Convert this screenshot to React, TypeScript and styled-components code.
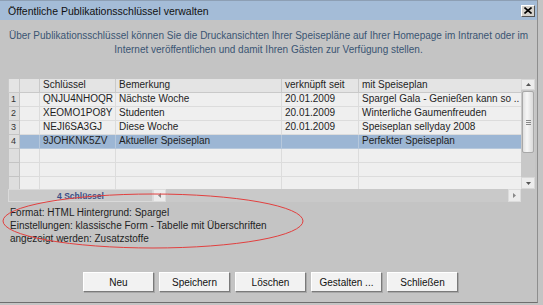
import React from 'react';
import styled, { createGlobalStyle } from 'styled-components';

const GlobalStyle = createGlobalStyle`
  html, body {
    margin: 0;
    padding: 0;
    background: #c4c4c4;
  }
  body {
    font-family: "Liberation Sans", Arial, sans-serif;
    font-size: 10px;
    color: #1e1e1e;
  }
`;

type Row = {
  key: string;
  note: string;
  since: string;
  plan: string;
};

const rows: Row[] = [
  { key: 'QNJU4NHOQR', note: 'Nächste Woche', since: '20.01.2009', plan: 'Spargel Gala - Genießen kann so ..' },
  { key: 'XEOMO1PO8Y', note: 'Studenten', since: '20.01.2009', plan: 'Winterliche Gaumenfreuden' },
  { key: 'NEJI6SA3GJ', note: 'Diese Woche', since: '20.01.2009', plan: 'Speiseplan sellyday 2008' },
  { key: '9JOHKNK5ZV', note: 'Aktueller Speiseplan', since: '', plan: 'Perfekter Speiseplan' },
];

const columns = [11, 20, 76, 166, 77, 163];

export default function App() {
  return (
    <>
      <GlobalStyle />
      <Window>
        <TitleBar>
          <Title>Öffentliche Publikationsschlüssel verwalten</Title>
          <CloseButton aria-label="Schließen">
            <svg width="8" height="7" viewBox="0 0 8 7">
              <path d="M0.5 0.5 L7.5 6.5 M7.5 0.5 L0.5 6.5" stroke="#000" strokeWidth="1.6" />
            </svg>
          </CloseButton>
        </TitleBar>

        <Body>
          <Intro>
            Über Publikationsschlüssel können Sie die Druckansichten Ihrer Speisepläne auf Ihrer Homepage im Intranet oder im
            <br />
            Internet veröffentlichen und damit Ihren Gästen zur Verfügung stellen.
          </Intro>

          <TableFrame>
            <TableRow>
              <TableScroll>
                <Grid>
                  <colgroup>
                    {columns.map((w, i) => (
                      <col key={i} style={{ width: w }} />
                    ))}
                  </colgroup>
                  <thead>
                    <tr>
                      <HeadCell />
                      <HeadCell />
                      <HeadCell>Schlüssel</HeadCell>
                      <HeadCell>Bemerkung</HeadCell>
                      <HeadCell>verknüpft seit</HeadCell>
                      <HeadCell>mit Speiseplan</HeadCell>
                    </tr>
                  </thead>
                  <tbody>
                    {rows.map((r, i) => {
                      const selected = i === 3;
                      return (
                        <tr key={r.key}>
                          <NumCell>{i + 1}</NumCell>
                          <Cell $selected={selected} />
                          <Cell $selected={selected}>{r.key}</Cell>
                          <Cell $selected={selected}>{r.note}</Cell>
                          <Cell $selected={selected}>{r.since}</Cell>
                          <Cell $selected={selected}>{r.plan}</Cell>
                        </tr>
                      );
                    })}
                    {[0, 1, 2].map((n) => (
                      <tr key={`empty-${n}`}>
                        <NumCell />
                        <Cell />
                        <Cell />
                        <Cell />
                        <Cell />
                        <Cell />
                      </tr>
                    ))}
                  </tbody>
                </Grid>
              </TableScroll>

              <VScroll>
                <ArrowCell $h={11}>
                  <svg width="5" height="3" viewBox="0 0 5 3">
                    <path d="M0 3 L2.5 0 L5 3 Z" fill="#555" />
                  </svg>
                </ArrowCell>
                <Thumb>
                  <Grip />
                </Thumb>
                <Track />
                <ArrowCell $h={12}>
                  <svg width="5" height="3" viewBox="0 0 5 3">
                    <path d="M0 0 L2.5 3 L5 0 Z" fill="#555" />
                  </svg>
                </ArrowCell>
              </VScroll>
            </TableRow>

            <HScroll>
              <CountLabel>4 Schlüssel</CountLabel>
              <HArrow>
                <svg width="3" height="5" viewBox="0 0 3 5">
                  <path d="M3 0 L0 2.5 L3 5 Z" fill="#888" />
                </svg>
              </HArrow>
              <HTrack />
              <HArrow>
                <svg width="3" height="5" viewBox="0 0 3 5">
                  <path d="M0 0 L3 2.5 L0 5 Z" fill="#888" />
                </svg>
              </HArrow>
              <Corner />
            </HScroll>
          </TableFrame>

          <Info>
            <div>Format: HTML Hintergrund: Spargel</div>
            <div>Einstellungen: klassische Form - Tabelle mit Überschriften</div>
            <div>angezeigt werden: Zusatzstoffe</div>
          </Info>

          <Buttons>
            <Button>Neu</Button>
            <Button>Speichern</Button>
            <Button>Löschen</Button>
            <Button>Gestalten ...</Button>
            <Button>Schließen</Button>
          </Buttons>
        </Body>

        <Annotation width="310" height="62" viewBox="0 0 310 62">
          <ellipse cx="153" cy="29" rx="150" ry="27" fill="none" stroke="#e2403f" strokeWidth="1" />
        </Annotation>
      </Window>
    </>
  );
}

const Window = styled.div`
  position: relative;
  width: 537px;
  height: 302px;
  background: #c4c4c4;
  border-right: 1px solid #8e8e8e;
  border-bottom: 1px solid #6e6e6e;
  display: flex;
  flex-direction: column;
`;

const TitleBar = styled.div`
  height: 20px;
  box-sizing: border-box;
  background: #a4bcd7;
  border-top: 1px solid #8d9fb4;
  display: flex;
  align-items: center;
  justify-content: space-between;
  padding: 0 2px 0 8px;
`;

const Title = styled.span`
  font-size: 10.5px;
  color: #111;
`;

const CloseButton = styled.div`
  width: 14px;
  height: 12px;
  box-sizing: border-box;
  background: #d6d3cd;
  border: 1px solid;
  border-color: #fff #555 #555 #fff;
  display: flex;
  align-items: center;
  justify-content: center;
`;

const Body = styled.div`
  flex: 1;
  display: flex;
  flex-direction: column;
  padding: 0 0 0 8px;
`;

const Intro = styled.p`
  margin: 9px 0 0 -8px;
  text-align: center;
  line-height: 14px;
  color: #3a5573;
`;

const TableFrame = styled.div`
  margin-top: 22px;
  width: 527px;
  display: flex;
  flex-direction: column;
`;

const TableRow = styled.div`
  display: flex;
  height: 110px;
`;

const TableScroll = styled.div`
  width: 513px;
  overflow: hidden;
  background: #ececec;
`;

const Grid = styled.table`
  border-collapse: collapse;
  table-layout: fixed;
  width: 513px;
`;

const HeadCell = styled.th`
  height: 13px;
  padding: 0 0 0 3px;
  box-sizing: border-box;
  font-weight: normal;
  text-align: left;
  background: #e4e4e4;
  border: 1px solid #c9c9c9;
  border-top: none;
  white-space: nowrap;
  overflow: hidden;
  line-height: 12px;
`;

const Cell = styled.td<{ $selected?: boolean }>`
  height: 14px;
  padding: 0 0 0 3px;
  box-sizing: border-box;
  background: ${({ $selected }) => ($selected ? '#9cb6d4' : '#efefef')};
  border: 1px solid ${({ $selected }) => ($selected ? '#b6c8dc' : '#dcdcdc')};
  white-space: nowrap;
  overflow: hidden;
  line-height: 12px;
`;

const NumCell = styled.td`
  height: 14px;
  padding: 0 0 0 2px;
  box-sizing: border-box;
  background: #dedede;
  border: 1px solid #c4c4c4;
  font-size: 9px;
  line-height: 12px;
  color: #333;
`;

const VScroll = styled.div`
  width: 14px;
  display: flex;
  flex-direction: column;
  background: #c8c8c8;
`;

const ArrowCell = styled.div<{ $h: number }>`
  height: ${({ $h }) => $h}px;
  display: flex;
  align-items: center;
  justify-content: center;
  background: #ececec;
  border: 1px solid #d8d8d8;
  box-sizing: border-box;
`;

const Thumb = styled.div`
  height: 62px;
  box-sizing: border-box;
  margin: 1px 1px 0;
  border: 1px solid #a8a8a8;
  border-radius: 2px;
  background: linear-gradient(to right, #e0e0e0, #f6f6f6 40%, #dadada);
  display: flex;
  align-items: center;
  justify-content: center;
`;

const Grip = styled.div`
  width: 5px;
  height: 5px;
  background: repeating-linear-gradient(to bottom, #888 0 1px, transparent 1px 2px);
`;

const Track = styled.div`
  flex: 1;
`;

const HScroll = styled.div`
  display: flex;
  height: 13px;
`;

const CountLabel = styled.div`
  width: 145px;
  box-sizing: border-box;
  background: #cacaca;
  border: 1px solid #dadada;
  text-align: center;
  font-size: 8.5px;
  line-height: 13px;
  color: #3b4f86;
  font-weight: bold;
`;

const HArrow = styled.div`
  width: 13px;
  display: flex;
  align-items: center;
  justify-content: center;
  background: #ececec;
  border: 1px solid #dcdcdc;
  box-sizing: border-box;
`;

const HTrack = styled.div`
  flex: 1;
  background: #c9c9c9;
`;

const Corner = styled.div`
  width: 14px;
  background: #c4c4c4;
`;

const Info = styled.div`
  margin-top: 4px;
  line-height: 13px;
  color: #1e1e1e;
  padding-left: 2px;
`;

const Buttons = styled.div`
  margin-top: 27px;
  margin-left: -8px;
  display: flex;
  justify-content: center;
  gap: 5px;
  padding-left: 4px;
`;

const Button = styled.button`
  width: 71px;
  height: 20px;
  box-sizing: border-box;
  font-family: "Liberation Sans", Arial, sans-serif;
  font-size: 10px;
  color: #111;
  background: #f2f2f2;
  border: 1px solid;
  border-color: #ffffff #7a7a7a #7a7a7a #ffffff;
  box-shadow: 1px 1px 0 #a8a8a8;
  padding: 0;
`;

const Annotation = styled.svg`
  position: absolute;
  left: 0;
  top: 192px;
  pointer-events: none;
  overflow: visible;
`;
